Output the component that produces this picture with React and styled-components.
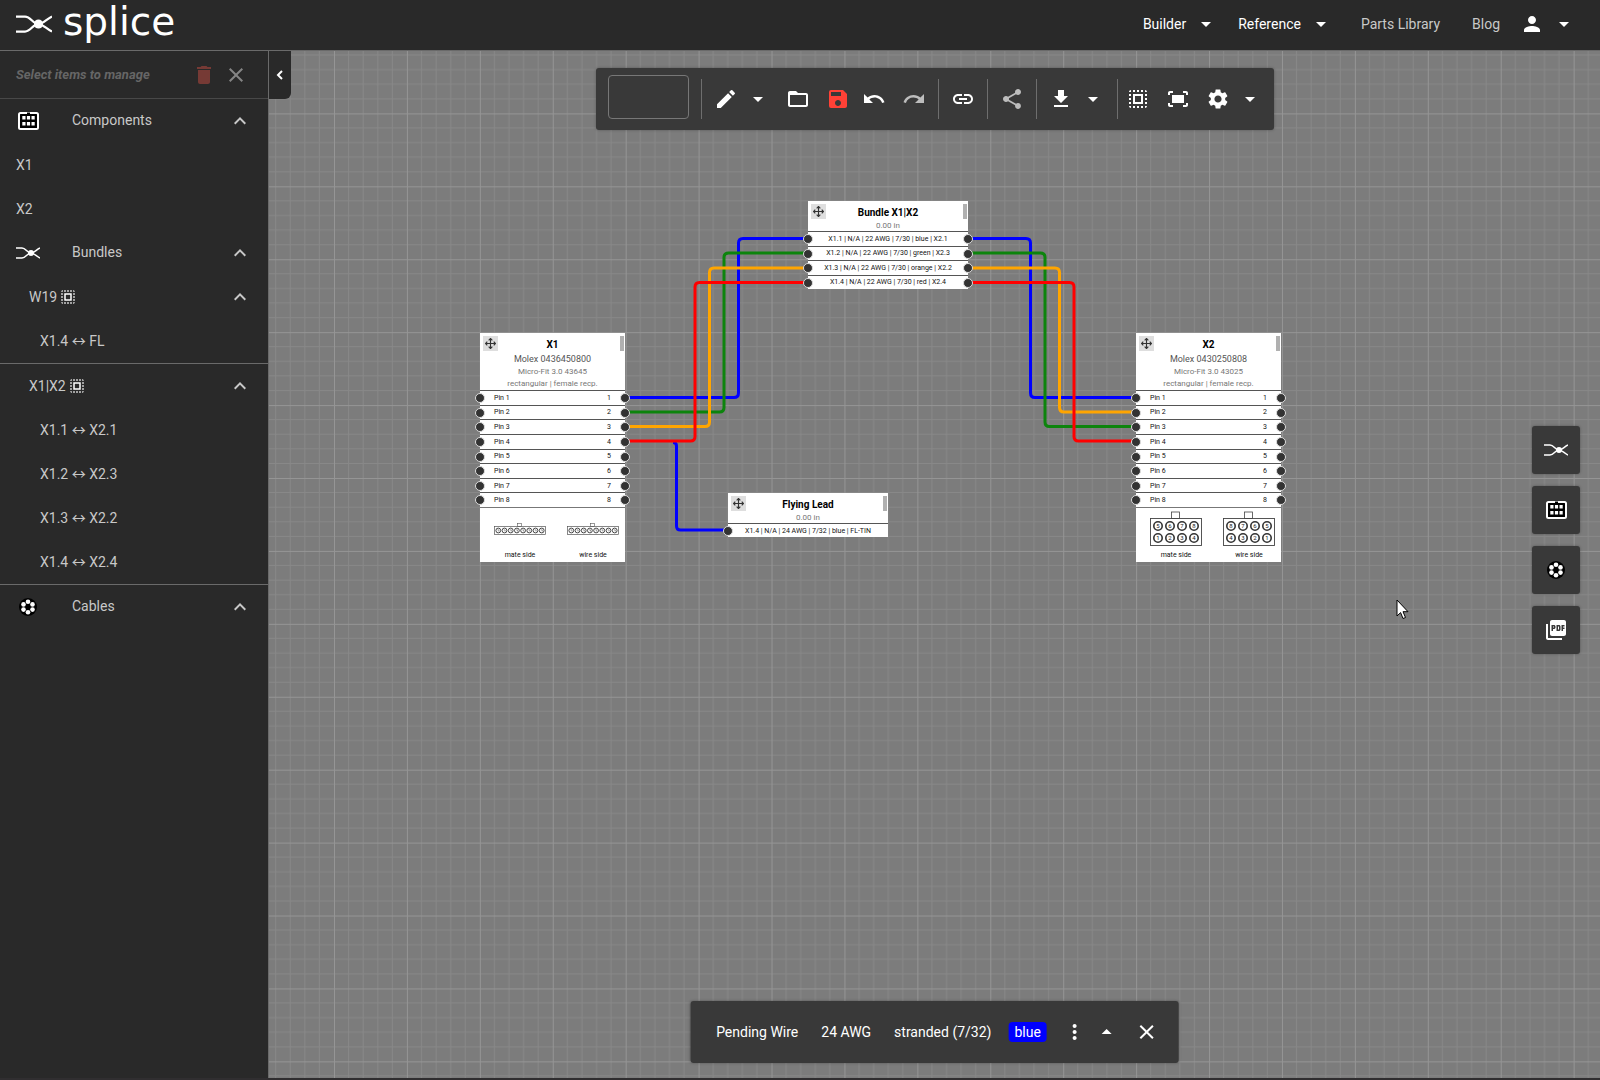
import React, { useState } from "react";
import styled, { createGlobalStyle, css } from "styled-components";
import {
  MdArrowDropDown,
  MdArrowDropUp,
  MdClose,
  MdDelete,
  MdEdit,
  MdFitScreen,
  MdFolderOpen,
  MdKeyboardArrowUp,
  MdLink,
  MdMoreVert,
  MdPerson,
  MdPictureAsPdf,
  MdRedo,
  MdSave,
  MdSelectAll,
  MdSettings,
  MdShare,
  MdUndo,
} from "react-icons/md";

const GlobalStyle = createGlobalStyle`
  * { box-sizing: border-box; }
  body {
    margin: 0;
    background: #292929;
    color: #c8c8c8;
    font: 14px/20px Roboto, "Noto Sans CJK JP", sans-serif;
  }
  button, input { font: inherit; color: inherit; }
`;

const plainButton = css`
  display: flex;
  align-items: center;
  justify-content: center;
  padding: 0;
  border: none;
  background: none;
  color: inherit;
  cursor: pointer;
`;

const Page = styled.div`
  display: flex;
  flex-direction: column;
  height: 100vh;
  border-bottom: 2px solid #302e30;
`;

/* ---------- header ---------- */

const Header = styled.header`
  display: flex;
  align-items: center;
  justify-content: space-between;
  height: 51px;
  padding: 0 24px 2px 16px;
  border-bottom: 1px solid #6a6a6a;
  flex: none;
`;

const Brand = styled.a`
  display: flex;
  align-items: center;
  gap: 11px;
  color: #fff;
  text-decoration: none;
`;

const BrandName = styled.span`
  font: 39px/44px "DejaVu Sans", sans-serif;
  height: 48px;
`;

const Nav = styled.nav`
  display: flex;
  align-items: center;
  gap: 20px;
`;

const NavMenu = styled.button`
  ${plainButton}
  gap: 8px;
  color: #fff;
`;

const NavLinks = styled.div`
  display: flex;
  gap: 32px;
  margin-left: 8px;
`;

const NavLink = styled.a`
  color: #c8c8c8;
  text-decoration: none;
`;

/* ---------- sidebar ---------- */

const Body = styled.div`
  display: flex;
  flex: 1;
  min-height: 0;
`;

const Sidebar = styled.aside`
  width: 269px;
  flex: none;
  border-right: 1px solid #6a6a6a;
`;

const ManageBar = styled.div`
  display: flex;
  align-items: center;
  height: 48px;
  padding: 0 20px 0 16px;
  gap: 8px;
  border-bottom: 1px solid #484848;
`;

const ManageHint = styled.span`
  flex: 1;
  font-size: 13px;
  font-weight: 700;
  font-style: italic;
  color: #666;
`;

const ManageButton = styled.button`
  ${plainButton}
  width: 24px;
  height: 24px;
  color: ${(p) => p.$color};
`;

const Row = styled.div`
  display: flex;
  align-items: center;
  height: 44px;
  padding: 0 16px 0 ${(p) => p.$indent || 16}px;
`;

const Group = styled.div`
  border-bottom: 1px solid #6a6a6a;
`;

const SectionIcon = styled.span`
  display: flex;
  justify-content: center;
  width: 24px;
  margin-right: 32px;
`;

const SectionTitle = styled.span`
  flex: 1;
  padding-bottom: 2px;
`;

const GroupTitle = styled.span`
  flex: 1;
  display: flex;
  align-items: center;
  gap: 2px;
  svg { color: #fff; }
`;

const Collapse = styled.button`
  ${plainButton}
`;

/* ---------- canvas ---------- */

const Canvas = styled.main`
  position: relative;
  flex: 1;
  overflow: hidden;
  background: #7c7c7c;
`;

const Backdrop = styled.svg`
  position: absolute;
  inset: 0;
  width: 100%;
  height: 100%;
`;

const DrawerTab = styled.button`
  ${plainButton}
  position: absolute;
  top: 0;
  left: 0;
  width: 22px;
  height: 48px;
  background: #292929;
  color: #fff;
  border-radius: 0 0 6px 0;
`;

const panel = css`
  background: #393939;
  border-radius: 3px;
  box-shadow: 0 0 3px rgba(0, 0, 0, 0.3);
  color: #fff;
`;

const Toolbar = styled.div`
  ${panel}
  position: absolute;
  top: 17px;
  left: 50%;
  transform: translateX(-50%);
  display: flex;
  align-items: center;
  height: 62px;
  padding: 0 12px;
`;

const NameBox = styled.input`
  width: 81px;
  height: 44px;
  margin: 0 12px 4px 0;
  border: 1px solid #777;
  border-radius: 4px;
  background: transparent;
  padding: 0 8px;
`;

const Divider = styled.span`
  width: 1px;
  height: 40px;
  background: #6e6e6e;
  margin: ${(p) => (p.$first ? "0 4px 0 0" : p.$last ? "0 0 0 4px" : "0 4px")};
`;

const ToolButton = styled.button`
  ${plainButton}
  width: ${(p) => p.$width || 40}px;
  height: 40px;
  color: ${(p) => p.$color || "#fff"};
`;

const SplitButton = styled.div`
  display: flex;
  margin-right: ${(p) => (p.$last ? 0 : 8)}px;
`;

const History = styled.div`
  display: flex;
  gap: 8px;
  padding-right: 4px;
`;

const Palette = styled.div`
  position: absolute;
  top: 375px;
  right: 20px;
  display: grid;
  gap: 12px;
`;

const PaletteButton = styled.button`
  ${plainButton}
  ${panel}
  width: 48px;
  height: 48px;
`;

const WireBar = styled.div`
  ${panel}
  position: absolute;
  bottom: 15px;
  left: 50%;
  transform: translateX(-50%);
  display: flex;
  align-items: center;
  height: 62px;
  padding: 0 20px 0 26px;
  white-space: nowrap;
`;

const WireFields = styled.div`
  display: flex;
  gap: 23px;
  margin-right: 17px;
`;

const WireColor = styled.span`
  padding: 0 6px;
  border-radius: 4px;
  background: #0000ff;
  margin-right: 16px;
`;

const WireActions = styled.div`
  display: flex;
  gap: 8px;
`;

const WireClose = styled.div`
  margin-left: 16px;
`;

const Pointer = styled.svg`
  position: absolute;
  left: 1127px;
  top: 548px;
`;

/* ---------- nodes ---------- */

const NodeBox = styled.section`
  position: absolute;
  left: ${(p) => p.$x}px;
  top: ${(p) => p.$y}px;
  width: ${(p) => p.$w}px;
  background: #fff;
  color: #111;
`;

const NodeHead = styled.div`
  position: relative;
  height: ${(p) => p.$h}px;
  padding-top: 4px;
  text-align: center;
  color: #777;
  font-size: 8px;
  line-height: 12px;
`;

const NodeTitle = styled.div`
  font-size: 10px;
  line-height: 15px;
  font-weight: 700;
  color: #000;
`;

const NodePart = styled.div`
  font-size: 9px;
  line-height: 14px;
  color: #555;
`;

const DragHandle = styled.button`
  ${plainButton}
  position: absolute;
  left: 3px;
  top: 3px;
  width: 15px;
  height: 15px;
  background: #dedede;
  color: #333;
`;

const Grip = styled.span`
  position: absolute;
  right: 1px;
  top: 3px;
  width: 4px;
  height: 15px;
  background: #b0b0b0;
`;

const NodeRows = styled.div`
  display: flex;
  flex-direction: column;
  height: ${(p) => p.$h}px;
`;

const NodeRow = styled.div`
  position: relative;
  flex: 1;
  display: flex;
  align-items: center;
  justify-content: ${(p) => (p.$center ? "center" : "space-between")};
  padding: 0 14px;
  border-top: 1px solid #555;
  font-size: 7px;
  line-height: 8px;
  white-space: nowrap;
`;

const Port = styled.span`
  position: absolute;
  ${(p) => p.$side}: -5px;
  top: 2px;
  width: 10px;
  height: 10px;
  border: 1px solid #ddd;
  border-radius: 50%;
  background: #333;
`;

const NodeFoot = styled.div`
  display: flex;
  gap: 21px;
  height: 55px;
  padding: 2px 0 0 14px;
  border-top: 1px solid #777;
  font-size: 7px;
  line-height: 8px;
`;

const View = styled.figure`
  margin: 0;
  width: 52px;
  text-align: center;
  svg { display: block; margin-bottom: 5px; }
`;

/* ---------- drawings ---------- */

const BundleIcon = ({ width = 24 }) => (
  <svg width={width} height={width / 2} viewBox="0 0 24 12" fill="none" stroke="#fff" strokeWidth="1.5">
    <path d="M0 1H6C10 1 11 6 15 6C18 6 20 3 24 1" />
    <path d="M0 11H6C10 11 11 6 15 6C18 6 20 9 24 11" />
    <circle cx="15" cy="6" r="3" fill="#fff" stroke="none" />
  </svg>
);

const ConnectorIcon = () => (
  <svg width="21" height="18" viewBox="0 0 21 18">
    <rect x="1" y="1" width="19" height="16" rx="1.5" fill="#000" stroke="#fff" strokeWidth="2" />
    <path d="M9 0.500h3v3H9z" fill="#000" />
    {[4.3, 8.9, 13.5].map((x) => (
      <path key={x} d={`M${x} 4h3.200v3.600h-3.200zM${x} 10h3.200v3.600h-3.200z`} fill="#fff" />
    ))}
  </svg>
);

const CableIcon = () => (
  <svg width="18" height="18" viewBox="0 0 18 18">
    <circle cx="9" cy="9" r="9" fill="#000" />
    {[[9, 3.8], [13.5, 6.4], [13.5, 11.6], [9, 14.2], [4.5, 11.6], [4.5, 6.4]].map(([x, y]) => (
      <circle key={`${x}-${y}`} cx={x} cy={y} r="2.3" fill="#fff" />
    ))}
  </svg>
);

const DownloadIcon = () => (
  <svg width="24" height="24" viewBox="0 0 24 24" fill="currentColor">
    <path d="M19 9h-4V3H9v6H5l7 7 7-7zM5 18v2h14v-2H5z" />
  </svg>
);

const MoveIcon = () => (
  <svg width="11" height="11" viewBox="0 0 24 24" fill="none" stroke="currentColor" strokeWidth="2.5">
    <path d="M12 1v22M1 12h22M8 5l4-4 4 4M8 19l4 4 4-4M5 8l-4 4 4 4M19 8l4 4-4 4" />
  </svg>
);

// single row housing
const SlimHousing = () => (
  <svg width="52" height="36" viewBox="0 0 52 36" fill="none" stroke="#555">
    <rect x="23.5" y="13.5" width="4" height="3" strokeWidth="0.6" />
    <rect x="0.5" y="16.5" width="51" height="8" strokeWidth="0.7" />
    {[0, 1, 2, 3, 4, 5, 6, 7].map((i) => (
      <g key={i} transform={`translate(${4.3 + i * 6.2} 20.5)`}>
        <circle r="2.4" strokeWidth="0.9" stroke="#333" />
        <path d="M-0.8 -0.6H0.6V1" strokeWidth="0.6" />
      </g>
    ))}
  </svg>
);

// two row housing with numbered cavities
const DualHousing = ({ cavities }) => (
  <svg width="52" height="36" viewBox="0 0 52 36" fill="none" stroke="#444">
    <rect x="21.5" y="2" width="8" height="6.5" strokeWidth="0.8" />
    <rect x="0.5" y="8.5" width="51" height="27" strokeWidth="0.9" />
    {cavities.map((n, i) => {
      const x = 8 + (i % 4) * 12;
      const y = i < 4 ? 16 : 28;
      return (
        <g key={n}>
          <circle cx={x} cy={y} r="4.2" strokeWidth="1.6" stroke="#333" />
          <text x={x} y={y + 2} fontSize="6" textAnchor="middle" fill="#222" stroke="none">{n}</text>
        </g>
      );
    })}
  </svg>
);

const wires = [
  { color: "#0000ff", d: "M404 391.5Q407.5 391.5 407.5 395V475Q407.5 479 411.5 479H459" },
  { color: "#0000ff", d: "M356 346.5H465Q469.5 346.5 469.5 342V192Q469.5 187.5 474 187.5H539" },
  { color: "#0000ff", d: "M699 187.5H757Q761.5 187.5 761.5 192V342Q761.5 346.5 766 346.5H867" },
  { color: "#0c840c", d: "M356 361H450.5Q455 361 455 356.5V206.5Q455 202 459.5 202H539" },
  { color: "#0c840c", d: "M699 202H771.5Q776 202 776 206.5V371Q776 375.5 780.5 375.5H867" },
  { color: "#ffa500", d: "M356 375.5H436Q440.5 375.5 440.5 371V221.5Q440.5 217 445 217H539" },
  { color: "#ffa500", d: "M699 217H786Q790.5 217 790.5 221.5V356.5Q790.5 361 795 361H867" },
  { color: "#ff0000", d: "M356 390H421.5Q426 390 426 385.5V236Q426 231.5 430.5 231.5H539" },
  { color: "#ff0000", d: "M699 231.5H800.5Q805 231.5 805 236V385.5Q805 390 809.5 390H867" },
];

const NodeTop = ({ title, height, children }) => (
  <NodeHead $h={height}>
    <DragHandle aria-label={`Move ${title}`}><MoveIcon /></DragHandle>
    <NodeTitle>{title}</NodeTitle>
    {children}
    <Grip />
  </NodeHead>
);

const ConnectorNode = ({ x, y, title, part, series, mate, wire }) => (
  <NodeBox $x={x} $y={y} $w={145}>
    <NodeTop title={title} height={57}>
      <NodePart>{part}</NodePart>
      <div>{series}</div>
      <div>rectangular | female recp.</div>
    </NodeTop>
    <NodeRows $h={117}>
      {[1, 2, 3, 4, 5, 6, 7, 8].map((n) => (
        <NodeRow key={n}>
          <Port $side="left" />
          <span>Pin {n}</span>
          <span>{n}</span>
          <Port $side="right" />
        </NodeRow>
      ))}
    </NodeRows>
    <NodeFoot>
      <View>{mate}<figcaption>mate side</figcaption></View>
      <View>{wire}<figcaption>wire side</figcaption></View>
    </NodeFoot>
  </NodeBox>
);

const WireNode = ({ x, y, title, lines, height, open }) => (
  <NodeBox $x={x} $y={y} $w={160}>
    <NodeTop title={title} height={30}>0.00 in</NodeTop>
    <NodeRows $h={height}>
      {lines.map((line) => (
        <NodeRow key={line} $center>
          <Port $side="left" />
          {line}
          {!open && <Port $side="right" />}
        </NodeRow>
      ))}
    </NodeRows>
  </NodeBox>
);

const Section = ({ icon, title, children }) => {
  const [open, setOpen] = useState(true);
  return (
    <>
      <Row>
        <SectionIcon>{icon}</SectionIcon>
        <SectionTitle>{title}</SectionTitle>
        <Collapse aria-label={`Toggle ${title}`} onClick={() => setOpen(!open)}>
          <MdKeyboardArrowUp size={24} />
        </Collapse>
      </Row>
      {open && children}
    </>
  );
};

const BundleGroup = ({ name, items }) => {
  const [open, setOpen] = useState(true);
  return (
    <Group>
      <Row $indent={29}>
        <GroupTitle>{name}<MdSelectAll size={18} /></GroupTitle>
        <Collapse aria-label={`Toggle ${name}`} onClick={() => setOpen(!open)}>
          <MdKeyboardArrowUp size={24} />
        </Collapse>
      </Row>
      {open && items.map((item) => <Row key={item} $indent={40}>{item}</Row>)}
    </Group>
  );
};

export default function App() {
  const [name, setName] = useState("");

  return (
    <>
      <GlobalStyle />
      <Page>
        <Header>
          <Brand href="#">
            <BundleIcon width={36} />
            <BrandName>splice</BrandName>
          </Brand>
          <Nav>
            <NavMenu>Builder<MdArrowDropDown size={24} /></NavMenu>
            <NavMenu>Reference<MdArrowDropDown size={24} /></NavMenu>
            <NavLinks>
              <NavLink href="#">Parts Library</NavLink>
              <NavLink href="#">Blog</NavLink>
            </NavLinks>
            <NavMenu aria-label="Account">
              <MdPerson size={24} />
              <MdArrowDropDown size={24} />
            </NavMenu>
          </Nav>
        </Header>

        <Body>
          <Sidebar>
            <ManageBar>
              <ManageHint>Select items to manage</ManageHint>
              <ManageButton $color="#763a35" aria-label="Delete"><MdDelete size={24} /></ManageButton>
              <ManageButton $color="#858585" aria-label="Clear"><MdClose size={24} /></ManageButton>
            </ManageBar>
            <Section icon={<ConnectorIcon />} title="Components">
              <Row>X1</Row>
              <Row>X2</Row>
            </Section>
            <Section icon={<BundleIcon />} title="Bundles">
              <BundleGroup name="W19" items={["X1.4 ↔ FL"]} />
              <BundleGroup
                name="X1|X2"
                items={["X1.1 ↔ X2.1", "X1.2 ↔ X2.3", "X1.3 ↔ X2.2", "X1.4 ↔ X2.4"]}
              />
            </Section>
            <Section icon={<CableIcon />} title="Cables" />
          </Sidebar>

          <Canvas>
            <Backdrop>
              <defs>
                <pattern id="grid" x="65" y="62.4" width="72.92" height="72.92" patternUnits="userSpaceOnUse">
                  {[14.58, 29.17, 43.75, 58.34].map((p) => (
                    <path key={p} d={`M${p} 0V72.92M0 ${p}H72.92`} stroke="#888" />
                  ))}
                  <path d="M0.5 0V72.92M0 0.5H72.92" stroke="#959595" />
                </pattern>
              </defs>
              <rect width="100%" height="100%" fill="url(#grid)" />
              <g fill="none" strokeWidth="3">
                {wires.map((w) => <path key={w.d + w.color} d={w.d} stroke={w.color} />)}
              </g>
            </Backdrop>

            <ConnectorNode
              x={211}
              y={282}
              title="X1"
              part="Molex 0436450800"
              series="Micro-Fit 3.0 43645"
              mate={<SlimHousing />}
              wire={<SlimHousing />}
            />
            <WireNode
              x={539}
              y={150}
              title="Bundle X1|X2"
              height={58}
              lines={[
                "X1.1 | N/A | 22 AWG | 7/30 | blue | X2.1",
                "X1.2 | N/A | 22 AWG | 7/30 | green | X2.3",
                "X1.3 | N/A | 22 AWG | 7/30 | orange | X2.2",
                "X1.4 | N/A | 22 AWG | 7/30 | red | X2.4",
              ]}
            />
            <WireNode
              x={459}
              y={442}
              title="Flying Lead"
              height={14}
              open
              lines={["X1.4 | N/A | 24 AWG | 7/32 | blue | FL-TIN"]}
            />
            <ConnectorNode
              x={867}
              y={282}
              title="X2"
              part="Molex 0430250808"
              series="Micro-Fit 3.0 43025"
              mate={<DualHousing cavities={[5, 6, 7, 8, 1, 2, 3, 4]} />}
              wire={<DualHousing cavities={[8, 7, 6, 5, 4, 3, 2, 1]} />}
            />

            <DrawerTab aria-label="Collapse sidebar">
              <svg width="8" height="10" viewBox="0 0 8 10" fill="none" stroke="currentColor" strokeWidth="2">
                <path d="M6 1L2 5L6 9" />
              </svg>
            </DrawerTab>

            <Toolbar>
              <NameBox aria-label="Harness name" value={name} onChange={(e) => setName(e.target.value)} />
              <Divider $first />
              <SplitButton>
                <ToolButton aria-label="Edit"><MdEdit size={24} /></ToolButton>
                <ToolButton $width={24} aria-label="Edit options"><MdArrowDropDown size={24} /></ToolButton>
              </SplitButton>
              <ToolButton aria-label="Open"><MdFolderOpen size={24} /></ToolButton>
              <ToolButton $color="#ff4136" aria-label="Save"><MdSave size={24} /></ToolButton>
              <History>
                <ToolButton $width={32} aria-label="Undo"><MdUndo size={24} /></ToolButton>
                <ToolButton $width={32} $color="#bdbdbd" aria-label="Redo"><MdRedo size={24} /></ToolButton>
              </History>
              <Divider />
              <ToolButton aria-label="Link"><MdLink size={24} /></ToolButton>
              <Divider />
              <ToolButton $color="#bdbdbd" aria-label="Share"><MdShare size={24} /></ToolButton>
              <Divider />
              <SplitButton>
                <ToolButton aria-label="Download"><DownloadIcon /></ToolButton>
                <ToolButton $width={24} aria-label="Download options"><MdArrowDropDown size={24} /></ToolButton>
              </SplitButton>
              <Divider $last />
              <ToolButton aria-label="Select all"><MdSelectAll size={24} /></ToolButton>
              <ToolButton aria-label="Fit to screen"><MdFitScreen size={24} /></ToolButton>
              <SplitButton $last>
                <ToolButton aria-label="Settings"><MdSettings size={24} /></ToolButton>
                <ToolButton $width={24} aria-label="More settings"><MdArrowDropDown size={24} /></ToolButton>
              </SplitButton>
            </Toolbar>

            <Palette>
              <PaletteButton aria-label="Bundles"><BundleIcon /></PaletteButton>
              <PaletteButton aria-label="Components"><ConnectorIcon /></PaletteButton>
              <PaletteButton aria-label="Cables"><CableIcon /></PaletteButton>
              <PaletteButton aria-label="Export PDF"><MdPictureAsPdf size={24} /></PaletteButton>
            </Palette>

            <WireBar>
              <WireFields>
                <span>Pending Wire</span>
                <span>24 AWG</span>
                <span>stranded (7/32)</span>
              </WireFields>
              <WireColor>blue</WireColor>
              <WireActions>
                <ToolButton $width={24} aria-label="More"><MdMoreVert size={24} /></ToolButton>
                <ToolButton $width={24} aria-label="Expand"><MdArrowDropUp size={24} /></ToolButton>
              </WireActions>
              <WireClose>
                <ToolButton $width={24} aria-label="Close"><MdClose size={24} /></ToolButton>
              </WireClose>
            </WireBar>

            <Pointer width="13" height="21" viewBox="0 0 13 21">
              <path d="M1 1V17L4.6 13.6L7 19.5L9.5 18.5L7 12.7H12Z" fill="#fff" stroke="#000" />
            </Pointer>
          </Canvas>
        </Body>
      </Page>
    </>
  );
}
